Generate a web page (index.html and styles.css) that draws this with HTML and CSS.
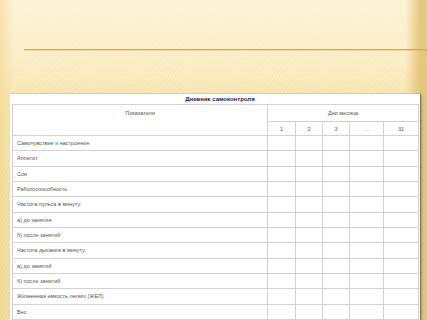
FILE: index.html
```html
<!DOCTYPE html>
<html lang="ru">
<head>
<meta charset="utf-8">
<link rel="stylesheet" href="styles.css">
</head>
<body>
<div class="slide">
  <div class="rule"></div>
  <div class="board">
    <div class="title">Дневник самоконтроля</div>
    <table class="diary">
      <colgroup>
        <col class="c-label"><col class="c-d1"><col class="c-d2"><col class="c-d3"><col class="c-d4"><col class="c-d5">
      </colgroup>
      <tr class="h1">
        <th rowspan="2" class="ind">Показатели</th>
        <th colspan="5">Дни месяца</th>
      </tr>
      <tr class="h2">
        <th>1</th><th>2</th><th>3</th><th>…</th><th>31</th>
      </tr>
      <tr class="r"><td>Самочувствие и настроение</td><td></td><td></td><td></td><td></td><td></td></tr>
      <tr class="r"><td>Аппетит</td><td></td><td></td><td></td><td></td><td></td></tr>
      <tr class="r"><td>Сон</td><td></td><td></td><td></td><td></td><td></td></tr>
      <tr class="r"><td>Работоспособность</td><td></td><td></td><td></td><td></td><td></td></tr>
      <tr class="r"><td>Частота пульса в минуту:</td><td></td><td></td><td></td><td></td><td></td></tr>
      <tr class="r"><td>а) до занятия</td><td></td><td></td><td></td><td></td><td></td></tr>
      <tr class="r"><td>б) после занятий</td><td></td><td></td><td></td><td></td><td></td></tr>
      <tr class="r"><td>Частота дыхания в минуту:</td><td></td><td></td><td></td><td></td><td></td></tr>
      <tr class="r"><td>а) до занятий</td><td></td><td></td><td></td><td></td><td></td></tr>
      <tr class="r"><td>б) после занятий</td><td></td><td></td><td></td><td></td><td></td></tr>
      <tr class="r"><td>Жизненная емкость легких (ЖЕЛ)</td><td></td><td></td><td></td><td></td><td></td></tr>
      <tr class="r"><td>Вес</td><td></td><td></td><td></td><td></td><td></td></tr>
    </table>
  </div>
</div>
</body>
</html>
```

FILE: styles.css
```css
html, body {
  margin: 0;
  padding: 0;
}
body {
  width: 427px;
  height: 320px;
  overflow: hidden;
  font-family: "Liberation Sans", Arial, sans-serif;
}
.slide {
  width: 427px;
  height: 320px;
  overflow: hidden;
  display: flex;
  flex-direction: column;
  background:
    linear-gradient(90deg, rgba(240, 212, 140, 0.55) 0, rgba(240, 212, 140, 0) 14px, rgba(240, 212, 140, 0) 405px, rgba(226, 196, 118, 0.9) 420px, rgba(226, 196, 118, 0.9) 427px),
    repeating-linear-gradient(120deg, rgba(255,255,255,0) 0 2px, rgba(255,255,255,0.28) 2px 3px),
    linear-gradient(180deg, #fcf2d3 0%, #fbecc2 18%, #f8e3aa 30%, #f3d999 100%);
}
.rule {
  margin: 49px 0 0 24px;
  height: 1px;
  background: #dca653;
  box-shadow: 0 1px 0 rgba(232, 186, 100, 0.5);
  flex: none;
}
.board {
  margin: 44px 7px 0 10px;
  padding: 0 2px 1px;
  background: #fff;
  box-shadow: 1px 0 1px rgba(90, 80, 60, 0.6), 2px 1px 3px rgba(120, 100, 60, 0.35);
  border-bottom: 1px solid #8a8a8a;
  flex: none;
}
.title {
  height: 10px;
  line-height: 10px;
  text-align: center;
  padding-left: 10px;
  font-size: 6px;
  font-weight: bold;
  color: #22244a;
}
.diary {
  width: 406px;
  table-layout: fixed;
  border-collapse: collapse;
  font-size: 5.5px;
  color: #555;
}
.c-label { width: 255px; }
.c-d1 { width: 28px; }
.c-d2 { width: 27px; }
.c-d3 { width: 27px; }
.c-d4 { width: 34px; }
.c-d5 { width: 35px; }
.diary th, .diary td {
  border: 1px solid #d2d2d2;
  padding: 0;
}
.diary th {
  font-weight: normal;
  text-align: center;
}
.h1 { height: 17px; }
.h2 { height: 14px; }
.ind {
  vertical-align: top;
  line-height: 16px;
}
.r { height: 15.33px; }
.r td:first-child {
  padding-left: 4px;
  white-space: nowrap;
}
```
